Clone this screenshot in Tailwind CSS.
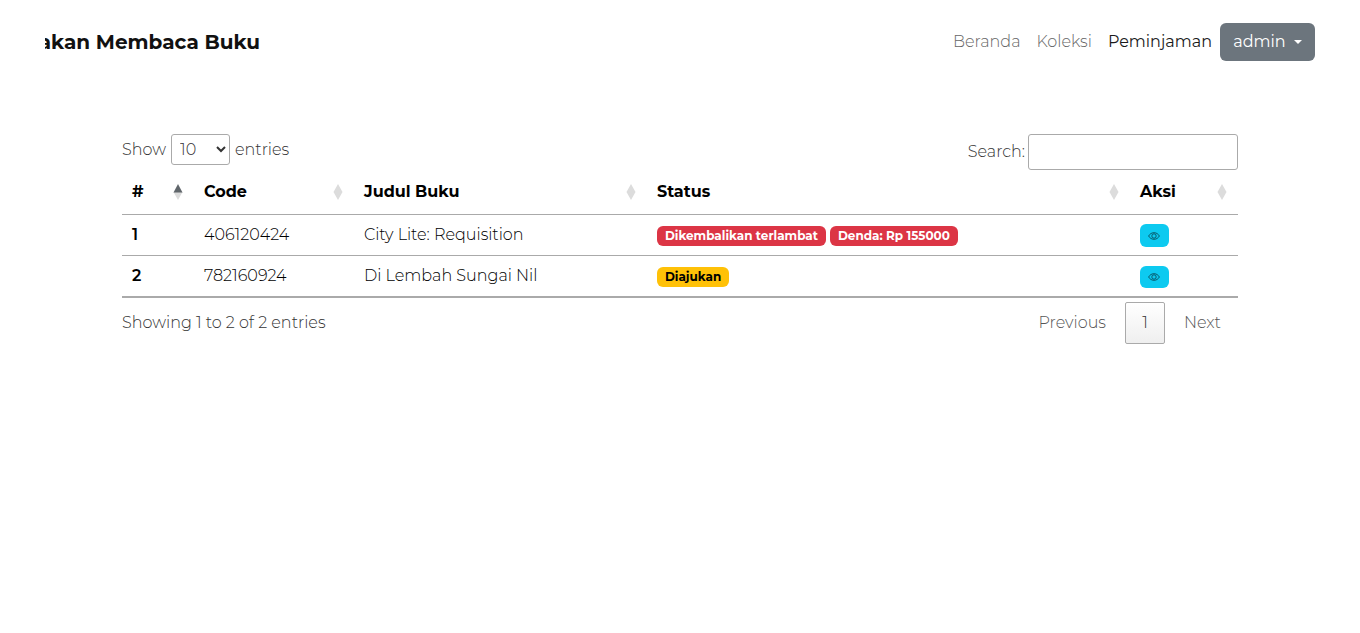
<!DOCTYPE html>
<html lang="id">
<head>
<meta charset="utf-8">
<meta name="viewport" content="width=device-width, initial-scale=1">
<title>Peminjaman</title>
<script src="https://cdn.jsdelivr.net/npm/@tailwindcss/browser@4"></script>
</head>
<body class="bg-white font-['Montserrat','Inter',sans-serif] text-base font-light text-[#212529]">
<svg class="hidden" aria-hidden="true">
  <symbol id="sort" viewBox="0 0 10 16"><path d="M5 0 9.5 8h-9z" fill="#dcdcdc"/><path d="M.5 8h9L5 16z" fill="#dcdcdc"/></symbol>
  <symbol id="sort-asc" viewBox="0 0 10 16"><path d="M.5 8h9L5 16z" fill="#dcdcdc"/><path d="M5 0 9.5 8.5h-9z" fill="#60666b"/></symbol>
  <symbol id="eye" viewBox="0 0 12 8"><path d="M.6 4C1.800 1.900 3.700.7 6 .7S10.200 1.900 11.400 4C10.200 6.100 8.300 7.300 6 7.300S1.800 6.100.6 4z" fill="none" stroke="#08404d" stroke-width=".8"/><circle cx="6" cy="4" r="2.200" fill="none" stroke="#08404d" stroke-width=".8"/></symbol>
</svg>
<header class="flex items-center justify-between px-[45px] pt-[23px]">
  <a href="#" class="flex w-[215px] justify-end overflow-hidden text-xl font-bold text-[#111] whitespace-nowrap">akan Membaca Buku</a>
  <nav class="flex items-center">
    <a href="#" class="px-2 text-[#666]">Beranda</a>
    <a href="#" class="px-2 text-[#666]">Koleksi</a>
    <a href="#" class="px-2 font-normal text-[#1a1a1a]">Peminjaman</a>
    <button type="button" class="flex h-[38px] w-[95px] items-center justify-center gap-2 rounded-md bg-[#6c757d] font-normal text-white">admin
      <svg class="h-1 w-2" viewBox="0 0 8 4" aria-hidden="true"><path d="M0 0h8L4 4z" fill="currentColor"/></svg>
    </button>
  </nav>
</header>
<main class="mx-auto max-w-[1140px] px-3 pt-[73px]">
  <div class="flex items-start justify-between">
    <label class="flex items-center gap-[5px] text-[#333]">Show
      <select class="h-[31px] w-[59px] rounded-[3px] border border-[#aaa] bg-white px-1"><option>10</option><option>25</option><option>50</option><option>100</option></select>
      entries</label>
    <label class="flex items-center gap-[3px] text-[#333]">Search:
      <input type="search" class="h-9 w-[210px] rounded-[3px] border border-[#aaa] px-2"></label>
  </div>
  <table class="w-full table-fixed border-separate border-spacing-0 text-left text-black">
    <colgroup><col class="w-[6.45%]"><col class="w-[14.34%]"><col class="w-[26.25%]"><col class="w-[43.28%]"><col class="w-[9.68%]"></colgroup>
    <thead>
      <tr class="h-[45px] font-semibold *:border-b *:border-[#aaa] *:px-[10px]">
        <th><div class="flex items-center justify-between">#<svg class="h-4 w-[10px] shrink-0 mr-px" aria-hidden="true"><use href="#sort-asc"/></svg></div></th>
        <th><div class="flex items-center justify-between">Code<svg class="h-4 w-[10px] shrink-0 mr-px" aria-hidden="true"><use href="#sort"/></svg></div></th>
        <th><div class="flex items-center justify-between">Judul Buku<svg class="h-4 w-[10px] shrink-0 mr-px" aria-hidden="true"><use href="#sort"/></svg></div></th>
        <th><div class="flex items-center justify-between">Status<svg class="h-4 w-[10px] shrink-0 mr-px" aria-hidden="true"><use href="#sort"/></svg></div></th>
        <th><div class="flex items-center justify-between">Aksi<svg class="h-4 w-[10px] shrink-0 mr-px" aria-hidden="true"><use href="#sort"/></svg></div></th>
      </tr>
    </thead>
    <tbody>
      <tr class="h-[41px] *:border-b *:border-[#aaa] *:px-[10px]">
        <th class="font-semibold">1</th><td>406120424</td><td>City Lite: Requisition</td>
        <td><div class="flex gap-1 pt-[2px] text-xs font-bold text-white"><span class="flex h-5 items-center rounded-md bg-[#dc3545] px-2">Dikembalikan terlambat</span><span class="flex h-5 items-center rounded-md bg-[#dc3545] px-2">Denda: Rp 155000</span></div></td>
        <td><button type="button" aria-label="Lihat" class="mt-px flex h-[23px] w-[29px] items-center justify-center rounded-md bg-[#0dcaf0]"><svg class="h-2 w-3" aria-hidden="true"><use href="#eye"/></svg></button></td>
      </tr>
      <tr class="h-[42px] *:border-b-2 *:border-[#aaa] *:px-[10px]">
        <th class="font-semibold">2</th><td>782160924</td><td>Di Lembah Sungai Nil</td>
        <td><div class="flex gap-1 pt-[2px] text-xs font-bold text-black"><span class="flex h-5 items-center rounded-md bg-[#ffc107] px-2">Diajukan</span></div></td>
        <td><button type="button" aria-label="Lihat" class="mt-[2px] flex h-[22px] w-[29px] items-center justify-center rounded-md bg-[#0dcaf0]"><svg class="h-2 w-3" aria-hidden="true"><use href="#eye"/></svg></button></td>
      </tr>
    </tbody>
  </table>
  <div class="flex items-center justify-between pt-1 text-[#333]">
    <p>Showing 1 to 2 of 2 entries</p>
    <div class="flex items-center gap-[2px]">
      <button type="button" class="px-[17px] text-[#555]">Previous</button>
      <button type="button" class="h-[42px] w-10 rounded-[2px] border border-[#aaa] bg-linear-to-b from-white to-[#efefef]">1</button>
      <button type="button" class="px-[17px] text-[#555]">Next</button>
    </div>
  </div>
</main>
</body>
</html>
